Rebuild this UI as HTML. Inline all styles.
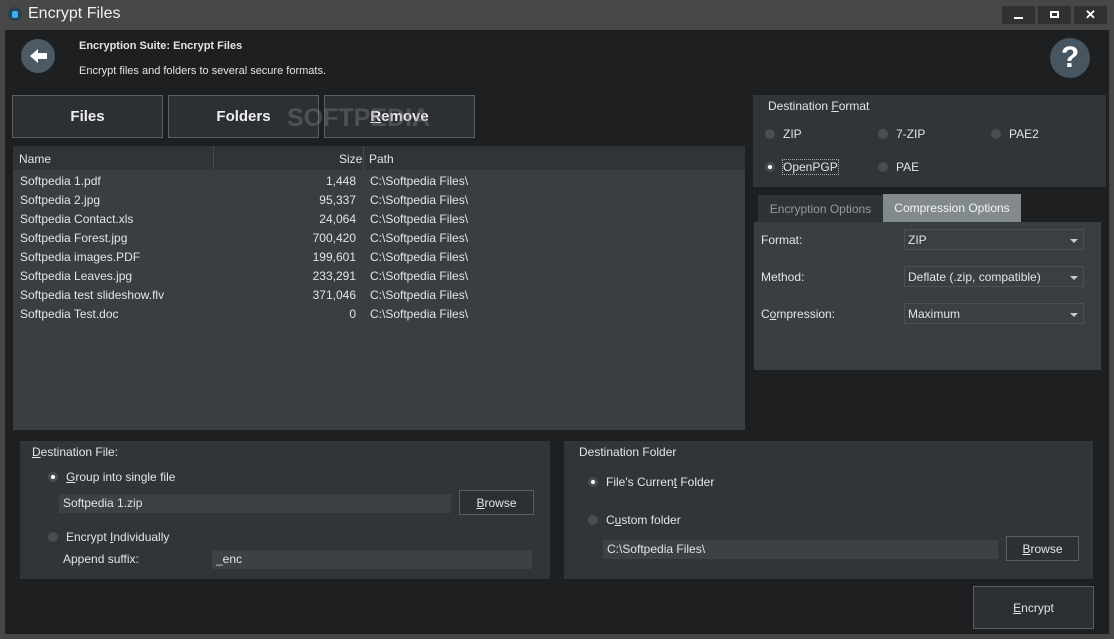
<!DOCTYPE html><html><head><meta charset="utf-8"><style>
*{margin:0;padding:0;box-sizing:border-box}
body{width:1114px;height:639px;background:#474747;font-family:"Liberation Sans",sans-serif;font-size:12px;color:#e4e4e4;position:relative;overflow:hidden}
.a{position:absolute}
.main{left:5px;top:30px;width:1104px;height:604px;background:#1e1f21}
.panel{background:#30353a}
.btn{border:1px solid #5a5f63;background:#2c3034;display:flex;align-items:center;justify-content:center}
.big{font-weight:bold;font-size:15px;color:#eee}
.radio{width:10px;height:10px;border-radius:50%;background:#4a4e52}
.radio.on::after{content:"";position:absolute;left:3px;top:3px;width:4px;height:4px;border-radius:50%;background:#fff}
.inp{background:#3c4145}
.sel{background:#3a3f43;border:1px solid #4b5054;padding-left:3px;line-height:20px}
.sel::after{content:"";position:absolute;right:5px;top:9px;border:4px solid transparent;border-top-color:#ccc;border-bottom:0}
.row{position:absolute;left:20px;width:720px;height:19px}
.row span{position:absolute;top:0}
.row .n{left:0}
.row .s{left:236px;width:100px;text-align:right}
.row .p{left:350px}
u{text-decoration:underline}
</style></head><body>
<div class="a" style="left:8px;top:7px;width:14px;height:14px;border-radius:50%;background:#2a4150"></div>
<div class="a" style="left:12px;top:11px;width:6px;height:7px;border-radius:2px;background:#3ab0f0"></div>
<div class="a" style="left:28px;top:5px;font-size:16px;color:#f0f0f0">Encrypt Files</div>
<div class="a" style="left:1002px;top:6px;width:33px;height:18px;background:#2f3133"></div>
<div class="a" style="left:1014px;top:17px;width:9px;height:2px;background:#fff"></div>
<div class="a" style="left:1038px;top:6px;width:33px;height:18px;background:#2f3133"></div>
<div class="a" style="left:1050px;top:11px;width:9px;height:7px;border:2px solid #fff"></div>
<div class="a" style="left:1074px;top:6px;width:33px;height:18px;background:#2f3133;color:#fff;font-weight:bold;text-align:center;line-height:18px;font-size:13px">✕</div>
<div class="a main"></div>
<div class="a" style="left:21px;top:39px;width:34px;height:34px;border-radius:50%;background:#4b5a64"></div>
<svg class="a" style="left:21px;top:39px" width="34" height="34"><path d="M9 17 L17 10 L17 14 L26 14 L26 20 L17 20 L17 24 Z" fill="#fff"/></svg>
<div class="a" style="left:79px;top:40px;font-weight:bold;font-size:11px">Encryption Suite: Encrypt Files</div>
<div class="a" style="left:79px;top:65px;font-size:11px">Encrypt files and folders to several secure formats.</div>
<div class="a" style="left:1050px;top:38px;width:40px;height:40px;border-radius:50%;background:#46555f;color:#fff;font-weight:bold;font-size:30px;text-align:center;line-height:40px">?</div>
<div class="a btn big" style="left:12px;top:95px;width:151px;height:43px">Files</div>
<div class="a btn big" style="left:168px;top:95px;width:151px;height:43px">Folders</div>
<div class="a btn big" style="left:324px;top:95px;width:151px;height:43px"><u>R</u>emove</div>
<div class="a" style="left:287px;top:104px;font-size:25px;font-weight:bold;color:rgba(130,130,130,.4)">SOFTPEDIA</div>
<div class="a" style="left:13px;top:146px;width:732px;height:284px;background:#393e42"></div>
<div class="a" style="left:13px;top:146px;width:732px;height:24px;background:#2f3437"></div>
<div class="a" style="left:213px;top:146px;width:1px;height:24px;background:#454a4e"></div>
<div class="a" style="left:363px;top:146px;width:1px;height:24px;background:#454a4e"></div>
<div class="a" style="left:19px;top:152px">Name</div>
<div class="a" style="left:339px;top:152px">Size</div>
<div class="a" style="left:369px;top:152px">Path</div>
<div class="row" style="top:174px"><span class="n">Softpedia 1.pdf</span><span class="s">1,448</span><span class="p">C:\Softpedia Files\</span></div>
<div class="row" style="top:193px"><span class="n">Softpedia 2.jpg</span><span class="s">95,337</span><span class="p">C:\Softpedia Files\</span></div>
<div class="row" style="top:212px"><span class="n">Softpedia Contact.xls</span><span class="s">24,064</span><span class="p">C:\Softpedia Files\</span></div>
<div class="row" style="top:231px"><span class="n">Softpedia Forest.jpg</span><span class="s">700,420</span><span class="p">C:\Softpedia Files\</span></div>
<div class="row" style="top:250px"><span class="n">Softpedia images.PDF</span><span class="s">199,601</span><span class="p">C:\Softpedia Files\</span></div>
<div class="row" style="top:269px"><span class="n">Softpedia Leaves.jpg</span><span class="s">233,291</span><span class="p">C:\Softpedia Files\</span></div>
<div class="row" style="top:288px"><span class="n">Softpedia test slideshow.flv</span><span class="s">371,046</span><span class="p">C:\Softpedia Files\</span></div>
<div class="row" style="top:307px"><span class="n">Softpedia Test.doc</span><span class="s">0</span><span class="p">C:\Softpedia Files\</span></div>

<div class="a panel" style="left:753px;top:95px;width:353px;height:92px"></div>
<div class="a" style="left:768px;top:99px">Destination <u>F</u>ormat</div>
<div class="a radio" style="left:765px;top:129px"></div><div class="a" style="left:783px;top:127px">ZIP</div>
<div class="a radio" style="left:878px;top:129px"></div><div class="a" style="left:896px;top:127px">7-ZIP</div>
<div class="a radio" style="left:991px;top:129px"></div><div class="a" style="left:1009px;top:127px">PAE2</div>
<div class="a radio on" style="left:765px;top:162px"></div><div class="a" style="left:783px;top:160px;outline:1px dotted #aaa">OpenPGP</div>
<div class="a radio" style="left:878px;top:162px"></div><div class="a" style="left:896px;top:160px">PAE</div>
<div class="a" style="left:758px;top:195px;width:125px;height:27px;background:#2e3337;color:#999;text-align:center;line-height:28px">Encryption Options</div>
<div class="a" style="left:883px;top:194px;width:138px;height:28px;background:#838a8e;text-align:center;line-height:28px;color:#f4f4f4">Compression Options</div>
<div class="a panel" style="left:754px;top:222px;width:347px;height:148px;background:#393e42"></div>
<div class="a" style="left:761px;top:233px">Format:</div>
<div class="a" style="left:761px;top:270px">Method:</div>
<div class="a" style="left:761px;top:307px">C<u>o</u>mpression:</div>
<div class="a sel" style="left:904px;top:229px;width:180px;height:21px">ZIP</div>
<div class="a sel" style="left:904px;top:266px;width:180px;height:21px">Deflate (.zip, compatible)</div>
<div class="a sel" style="left:904px;top:303px;width:180px;height:21px">Maximum</div>

<div class="a panel" style="left:20px;top:441px;width:530px;height:138px"></div>
<div class="a" style="left:32px;top:445px"><u>D</u>estination File:</div>
<div class="a radio on" style="left:48px;top:472px"></div><div class="a" style="left:66px;top:470px"><u>G</u>roup into single file</div>
<div class="a inp" style="left:59px;top:494px;width:392px;height:19px;padding:2px 4px">Softpedia 1.zip</div>
<div class="a btn" style="left:459px;top:490px;width:75px;height:25px"><u>B</u>rowse</div>
<div class="a radio" style="left:48px;top:532px"></div><div class="a" style="left:66px;top:530px">Encrypt <u>I</u>ndividually</div>
<div class="a" style="left:63px;top:552px">Append suffix:</div>
<div class="a inp" style="left:212px;top:550px;width:320px;height:19px;padding:2px 4px">_enc</div>

<div class="a panel" style="left:564px;top:441px;width:529px;height:138px"></div>
<div class="a" style="left:579px;top:445px">Destination Folder</div>
<div class="a radio on" style="left:588px;top:477px"></div><div class="a" style="left:606px;top:475px">File's Curren<u>t</u> Folder</div>
<div class="a radio" style="left:588px;top:515px"></div><div class="a" style="left:606px;top:513px">C<u>u</u>stom folder</div>
<div class="a inp" style="left:603px;top:540px;width:395px;height:19px;padding:2px 4px">C:\Softpedia Files\</div>
<div class="a btn" style="left:1006px;top:536px;width:73px;height:25px"><u>B</u>rowse</div>
<div class="a btn" style="left:973px;top:586px;width:121px;height:43px"><u>E</u>ncrypt</div>
</body></html>
